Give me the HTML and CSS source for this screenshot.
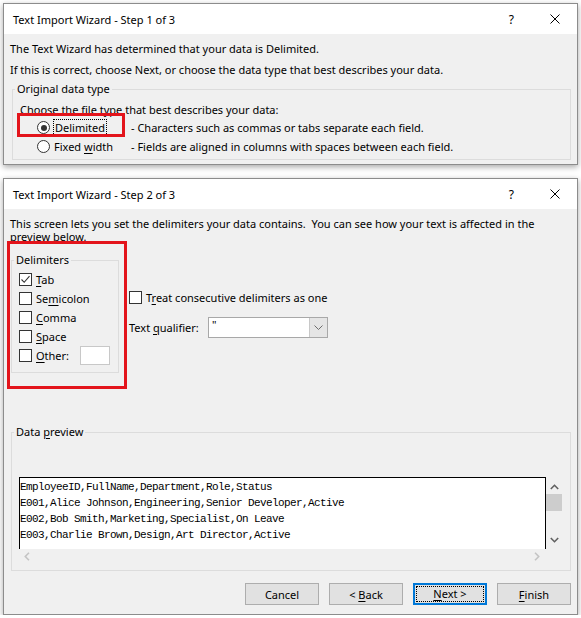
FILE: index.html
```html
<!DOCTYPE html>
<html lang="en">
<head>
  <meta charset="UTF-8">
  <meta name="viewport" content="width=device-width, initial-scale=1.0">
  <title>Text Import Wizard</title>
  <link rel="stylesheet" href="styles.css">
</head>
<body>
  <!-- Step 1 -->
  <div class="dialog step1">
    <div class="titlebar">
      <span class="title">Text Import Wizard - Step 1 of 3</span>
      <span class="help">?</span>
      <svg class="close" width="10" height="10" viewBox="0 0 10 10"><path d="M0.5 0.5 L9.5 9.5 M9.5 0.5 L0.5 9.5" stroke="#000" stroke-width="1" fill="none"/></svg>
    </div>
    <div class="dialog-body">
      <p class="line">The Text Wizard has determined that your data is Delimited.</p>
      <p class="line">If this is correct, choose Next, or choose the data type that best describes your data.</p>
      <fieldset class="group type-group">
        <legend>Original data type</legend>
        <div class="hint">Choose the file type that best describes your data:</div>
        <div class="radio-row">
          <span class="radio checked"></span>
          <span class="opt"><span class="focus"><u>D</u>elimited</span></span>
          <span class="desc">- Characters such as commas or tabs separate each field.</span>
        </div>
        <div class="radio-row">
          <span class="radio"></span>
          <span class="opt">Fixed <u>w</u>idth</span>
          <span class="desc">- Fields are aligned in columns with spaces between each field.</span>
        </div>
      </fieldset>
    </div>
    <div class="annotate annotate-type"></div>
  </div>

  <!-- Step 2 -->
  <div class="dialog step2">
    <div class="titlebar">
      <span class="title">Text Import Wizard - Step 2 of 3</span>
      <span class="help">?</span>
      <svg class="close" width="10" height="10" viewBox="0 0 10 10"><path d="M0.5 0.5 L9.5 9.5 M9.5 0.5 L0.5 9.5" stroke="#000" stroke-width="1" fill="none"/></svg>
    </div>
    <div class="dialog-body">
      <p class="intro">This screen lets you set the delimiters your data contains.&nbsp; You can see how your text is affected in the preview below.</p>

      <div class="options">
        <fieldset class="group delim-group">
          <legend>Delimiters</legend>
          <div class="check-row">
            <span class="check checked"><svg width="11" height="11" viewBox="0 0 11 11"><path d="M1.5 5.5 L4.2 8.3 L9.5 2.2" stroke="#333" stroke-width="1.1" fill="none"/></svg></span>
            <span><u>T</u>ab</span>
          </div>
          <div class="check-row">
            <span class="check"></span>
            <span>Se<u>m</u>icolon</span>
          </div>
          <div class="check-row">
            <span class="check"></span>
            <span><u>C</u>omma</span>
          </div>
          <div class="check-row">
            <span class="check"></span>
            <span><u>S</u>pace</span>
          </div>
          <div class="check-row">
            <span class="check"></span>
            <span><u>O</u>ther:</span>
            <span class="other-box"></span>
          </div>
        </fieldset>

        <div class="side">
          <div class="check-row treat">
            <span class="check"></span>
            <span>T<u>r</u>eat consecutive delimiters as one</span>
          </div>
          <div class="qualifier">
            <span class="qualifier-label">Text <u>q</u>ualifier:</span>
            <div class="combo">
              <span class="combo-value">"</span>
              <span class="combo-btn"><svg width="9" height="5" viewBox="0 0 9 5"><path d="M0.5 0.5 L4.5 4.5 L8.5 0.5" stroke="#6d6d6d" fill="none"/></svg></span>
            </div>
          </div>
        </div>
      </div>

      <fieldset class="group preview-group">
        <legend>Data <u>p</u>review</legend>
        <div class="preview">
          <div class="preview-text">
            <div class="row">EmployeeID,FullName,Department,Role,Status</div>
            <div class="row">E001,Alice Johnson,Engineering,Senior Developer,Active</div>
            <div class="row">E002,Bob Smith,Marketing,Specialist,On Leave</div>
            <div class="row">E003,Charlie Brown,Design,Art Director,Active</div>
          </div>
          <div class="vscroll">
            <svg width="9" height="6" viewBox="0 0 9 6"><path d="M0.8 5 L4.5 1.3 L8.2 5" stroke="#606060" stroke-width="1.6" fill="none"/></svg>
            <span class="thumb"></span>
            <svg class="down" width="9" height="6" viewBox="0 0 9 6"><path d="M0.8 1 L4.5 4.7 L8.2 1" stroke="#606060" stroke-width="1.6" fill="none"/></svg>
          </div>
          <div class="hscroll">
            <svg width="6" height="9" viewBox="0 0 6 9"><path d="M5 0.8 L1.3 4.5 L5 8.2" stroke="#c4c4c4" stroke-width="1.6" fill="none"/></svg>
            <svg width="6" height="9" viewBox="0 0 6 9"><path d="M1 0.8 L4.7 4.5 L1 8.2" stroke="#c4c4c4" stroke-width="1.6" fill="none"/></svg>
          </div>
          <div class="corner"></div>
        </div>
      </fieldset>

      <div class="buttons">
        <button>Cancel</button>
        <button>&lt; <u>B</u>ack</button>
        <button class="default"><span class="focus"><u>N</u>ext &gt;</span></button>
        <button><u>F</u>inish</button>
      </div>
    </div>
    <div class="annotate annotate-delim"></div>
  </div>
</body>
</html>
```

FILE: styles.css
```css
body {
  margin: 0;
  background-color: #fff;
  font-family: "Noto Sans", "Open Sans", sans-serif;
  font-size: 11px;
  color: #000;
}

u {
  text-decoration-thickness: 1px;
  text-underline-offset: 2px;
}

.dialog {
  position: relative;
  margin: 0 3px;
  background-color: #f0f0f0;
  border: 1px solid #8c8c8c;
  box-shadow: 0 2px 6px rgba(0, 0, 0, 0.35);
}

.step1 {
  margin-top: 3px;
}

.step2 {
  margin-top: 13px;
}

.titlebar {
  display: flex;
  align-items: center;
  height: 30px;
  background-color: #fff;
}

.title {
  padding-left: 9px;
  flex: 1;
}

.help {
  margin-right: 36px;
  font-size: 12px;
}

.close {
  margin-right: 17px;
}

.dialog-body {
  padding: 4px 6px 4px 6px;
}

.line {
  margin: 0;
  line-height: 21px;
}

.group {
  margin: 0;
  padding: 0;
  border: 1px solid #dcdcdc;
  min-width: 0;
}

.group legend {
  margin-left: -5px;
  padding: 0 2px;
  line-height: 16px;
}

/* Step 1 group */
.type-group {
  margin: 1px 0 0 2px;
  padding: 5px 0 3px 7px;
}

.hint {
  line-height: 16px;
}

.radio-row {
  display: flex;
  align-items: center;
  height: 19px;
}

.radio {
  width: 11px;
  height: 11px;
  margin-left: 17px;
  border: 1px solid #333;
  border-radius: 50%;
  background-color: #fff;
  display: flex;
  align-items: center;
  justify-content: center;
  flex-shrink: 0;
}

.radio.checked::after {
  content: "";
  width: 6px;
  height: 6px;
  border-radius: 50%;
  background-color: #333;
}

.opt {
  box-sizing: border-box;
  width: 81px;
  padding-left: 4px;
  flex-shrink: 0;
}

.focus {
  outline: 1px dotted #000;
  outline-offset: 0;
  padding: 0 1px;
}

/* Step 2 */
.intro {
  margin: 4px 0 0;
  max-width: 540px;
  line-height: 13px;
}

.options {
  display: flex;
  align-items: flex-start;
  margin-top: 9px;
}

.delim-group {
  box-sizing: border-box;
  width: 108px;
  margin-left: 1px;
  padding: 2px 8px 7px 7px;
  flex-shrink: 0;
}

.check-row {
  display: flex;
  align-items: center;
  height: 19px;
  gap: 4px;
  white-space: nowrap;
}

.check {
  width: 11px;
  height: 11px;
  border: 1px solid #333;
  background-color: #fff;
  display: flex;
  align-items: center;
  justify-content: center;
  flex-shrink: 0;
}

.other-box {
  margin-left: auto;
  width: 28px;
  height: 17px;
  border: 1px solid #c8c8c8;
  background-color: #fff;
}

.side {
  margin-left: 10px;
  padding-top: 36px;
}

.treat {
  height: 18px;
}

.qualifier {
  display: flex;
  align-items: center;
  margin-top: 11px;
}

.qualifier-label {
  width: 79px;
}

.combo {
  display: flex;
  width: 118px;
  height: 19px;
  border: 1px solid #a8a8a8;
  background-color: #fff;
}

.combo-value {
  flex: 1;
  padding-left: 3px;
  line-height: 14px;
}

.combo-btn {
  width: 17px;
  background-color: #e5e5e5;
  border-left: 1px solid #c8c8c8;
  display: flex;
  align-items: center;
  justify-content: center;
}

.preview-group {
  margin: 51px 0 0 1px;
  padding: 37px 8px 7px 7px;
}

.preview {
  display: grid;
  grid-template-columns: 1fr 16px;
  grid-template-rows: 72px 14px;
}

.preview-text {
  background-color: #fff;
  border-top: 1px solid #000;
  border-left: 1px solid #000;
  border-right: 1px solid #000;
  padding-top: 1px;
  font-family: "Liberation Mono", "DejaVu Sans Mono", monospace;
  font-size: 11px;
  letter-spacing: -0.6px;
  line-height: 16px;
  overflow: hidden;
}

.preview-text .row {
  white-space: nowrap;
}

.vscroll {
  display: flex;
  flex-direction: column;
  align-items: center;
  padding-top: 7px;
}

.thumb {
  width: 16px;
  height: 17px;
  margin-top: 4px;
  background-color: #cdcdcd;
}

.vscroll .down {
  margin-top: auto;
  margin-bottom: 6px;
}

.hscroll {
  display: flex;
  justify-content: space-between;
  align-items: center;
  padding: 0 6px 0 5px;
}

.buttons {
  display: flex;
  justify-content: flex-end;
  gap: 10px;
  margin-top: 12px;
  padding-bottom: 5px;
}

button {
  width: 74px;
  height: 22px;
  padding: 0;
  background-color: #e1e1e1;
  border: 1px solid #adadad;
  font-family: inherit;
  font-size: 11px;
  color: #000;
}

button.default {
  border: 2px solid #0078d7;
  display: flex;
  align-items: center;
  justify-content: center;
}

button.default .focus {
  display: block;
  width: 66px;
  height: 14px;
  line-height: 14px;
  padding: 0;
}

/* red annotation boxes drawn over the screenshot */
.annotate {
  position: absolute;
  border: 3px solid #e3141b;
  pointer-events: none;
}

.annotate-type {
  left: 13px;
  top: 109px;
  width: 102px;
  height: 18px;
}

.annotate-delim {
  left: 3px;
  top: 62px;
  width: 114px;
  height: 142px;
}
```
